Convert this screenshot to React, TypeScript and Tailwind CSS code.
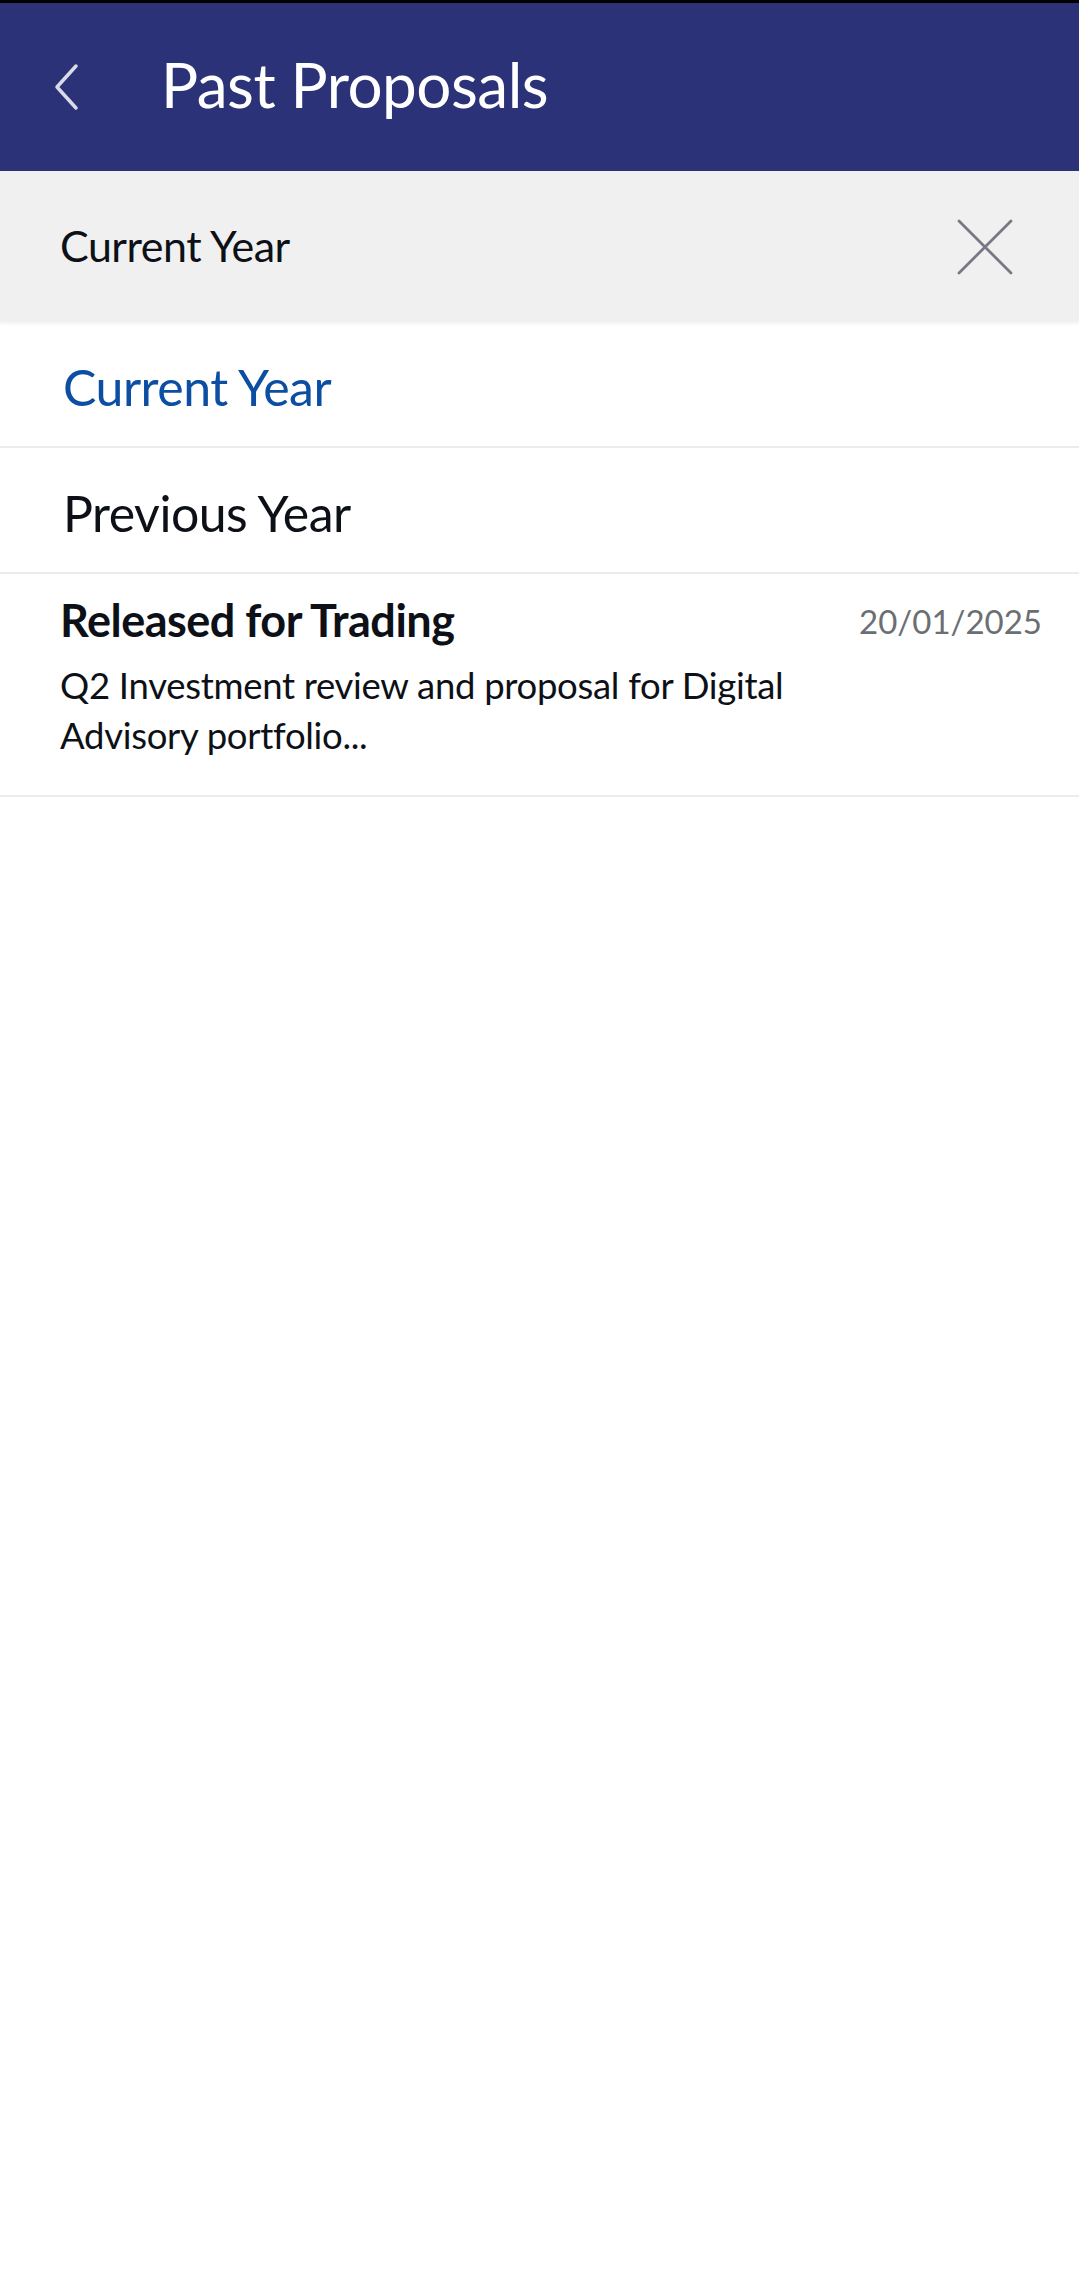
function BackChevron() {
  return (
    <svg width="28" height="48" viewBox="0 0 28 48" fill="none">
      <path d="M24 3 L5 24 L24 45" stroke="#d9dbe8" strokeWidth="3.5" strokeLinecap="round" strokeLinejoin="round" />
    </svg>
  )
}

function CloseIcon() {
  return (
    <svg width="56" height="56" viewBox="0 0 56 56" fill="none">
      <path d="M2 2 L54 54 M54 2 L2 54" stroke="#777785" strokeWidth="2.8" strokeLinecap="round" />
    </svg>
  )
}

const periods = [
  { label: "Current Year", active: true },
  { label: "Previous Year", active: false },
]

export default function App() {
  return (
    <div className="min-h-screen bg-white" style={{ fontFamily: "Lato, 'Noto Sans', sans-serif" }}>
      {/* Header */}
      <header className="h-[171px] bg-[#2b3277] border-t-[3px] border-black flex items-center">
        <div className="w-[161px] pl-[52px] flex items-center">
          <BackChevron />
        </div>
        <h1 className="text-white text-[62px] leading-none tracking-[-0.5px] -mt-[6px]">Past Proposals</h1>
      </header>

      {/* Selected filter */}
      <div className="h-[151px] bg-[#f0f0f0] flex items-center justify-between pl-[60px] pr-[66px] shadow-[0_2px_3px_rgba(0,0,0,0.05)]">
        <span className="text-[43px] text-[#0d1117] tracking-[-0.5px]">Current Year</span>
        <CloseIcon />
      </div>

      {/* Options */}
      {periods.map((p) => (
        <div
          key={p.label}
          className="h-[126px] flex items-center pl-[63px] pt-[6px] border-b-[2px] border-[#ececec]"
        >
          <span className={`text-[50px] tracking-[-0.5px] ${p.active ? "text-[#0b4ea2]" : "text-[#0d1117]"}`}>
            {p.label}
          </span>
        </div>
      ))}

      {/* Proposal item */}
      <div className="border-b-[2px] border-[#ececec] pl-[60px] pr-[37px] pt-[18px] pb-[35px]">
        <div className="flex items-start justify-between">
          <span className="text-[45px] font-bold text-[#0d1117] tracking-[-0.5px] leading-[56px]">Released for Trading</span>
          <span className="text-[33px] text-[#6b6e72] leading-[56px] mt-[1px]">20/01/2025</span>
        </div>
        <p className="mt-[11px] text-[36.5px] leading-[50px] text-[#0d1117] w-[800px] tracking-[-0.3px]">
          Q2 Investment review and proposal for Digital Advisory portfolio...
        </p>
      </div>
    </div>
  )
}
